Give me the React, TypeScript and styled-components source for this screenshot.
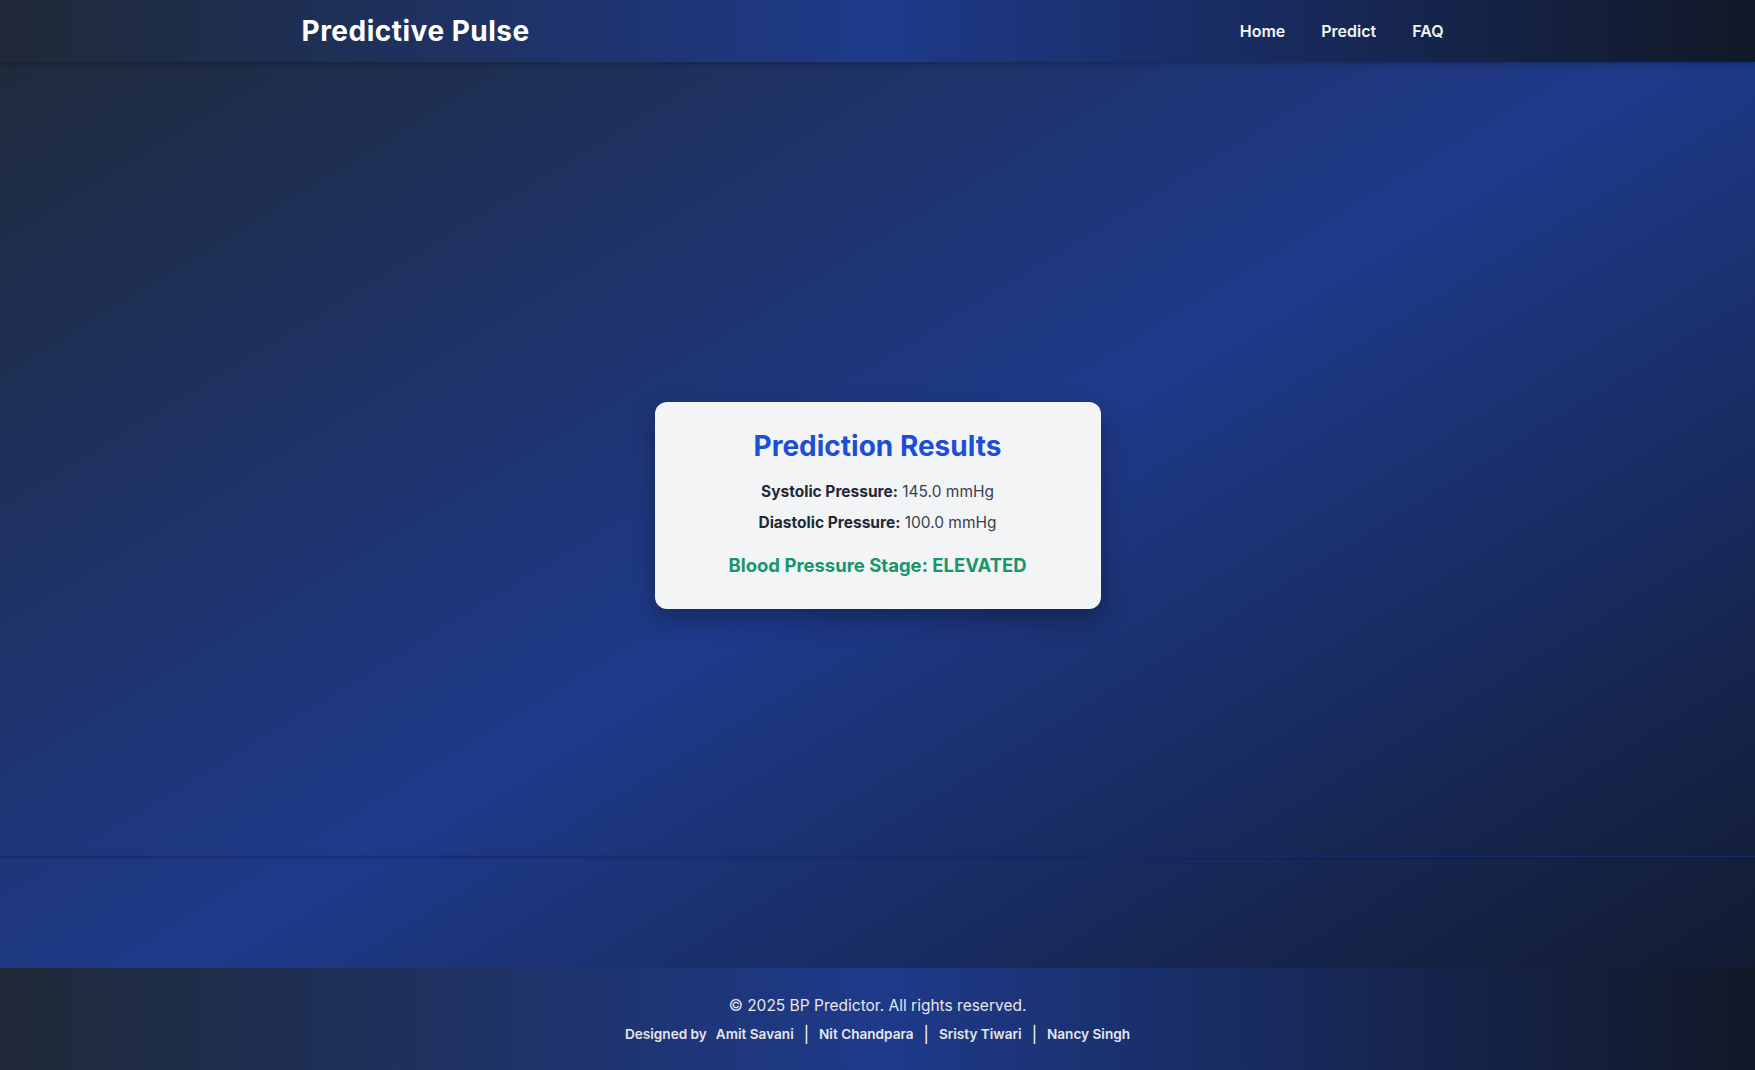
import React from "react";
import styled, { createGlobalStyle } from "styled-components";

const GlobalStyle = createGlobalStyle`
  html, body { margin: 0; padding: 0; }
  body {
    font-family: Inter, "Noto Sans", "Liberation Sans", sans-serif;
    -webkit-font-smoothing: antialiased;
  }
  * { box-sizing: border-box; }
`;

const Page = styled.div`
  min-height: 1070px;
  display: flex;
  flex-direction: column;
  background: linear-gradient(to bottom right, #1f2937, #1e3a8a, #111827);
`;

const Header = styled.header`
  height: 62px;
  background: linear-gradient(to right, #1f2937, #1e3a8a, #111827);
  box-shadow: 0 2px 6px rgba(0, 0, 0, 0.25);
  position: relative;
  z-index: 1;
`;

const HeaderInner = styled.div`
  max-width: 1152px;
  height: 100%;
  margin: 0 auto;
  display: flex;
  align-items: center;
  justify-content: space-between;
`;

const Logo = styled.div`
  color: #ffffff;
  font-size: 28px;
  font-weight: 700;
  letter-spacing: 0.5px;
`;

const Nav = styled.nav`
  display: flex;
  align-items: center;
  gap: 36px;
  padding-right: 10px;
`;

const NavLink = styled.a`
  color: #f3f4f6;
  font-size: 16px;
  font-weight: 600;
  text-decoration: none;
  cursor: pointer;
`;

const Main = styled.main`
  flex: 1;
  display: flex;
  flex-direction: column;
`;

const Content = styled.section`
  flex: 1;
  display: flex;
  align-items: center;
  justify-content: center;
  padding-top: 92px;
`;

const Divider = styled.div`
  height: 1px;
  background: #172a6b;
  box-shadow: 0 1px 3px rgba(10, 20, 60, 0.5);
`;

const Spacer = styled.div`
  height: 111px;
`;

const Card = styled.div`
  width: 446px;
  background: #f3f4f6;
  border-radius: 12px;
  padding: 26px 24px 31px;
  text-align: center;
  box-shadow: 0 10px 25px rgba(0, 0, 0, 0.3);
`;

const Title = styled.h2`
  margin: 0 0 16px;
  font-size: 28px;
  line-height: 36px;
  font-weight: 700;
  color: #1d4ed8;
`;

const Row = styled.p`
  margin: 0 0 7px;
  font-size: 15.5px;
  line-height: 24px;
  color: #374151;
`;

const Label = styled.strong`
  color: #1f2937;
  font-weight: 700;
`;

const Stage = styled.p`
  margin: 17px 0 0;
  font-size: 18.5px;
  line-height: 26px;
  font-weight: 700;
  color: #16966a;
`;

const Footer = styled.footer`
  height: 102px;
  background: linear-gradient(to right, #1f2937, #1e3a8a, #111827);
  display: flex;
  flex-direction: column;
  align-items: center;
  justify-content: center;
  gap: 7px;
`;

const Copyright = styled.div`
  color: #e5e7eb;
  font-size: 15.5px;
  line-height: 22px;
`;

const Credits = styled.div`
  display: flex;
  align-items: center;
  color: #e5e7eb;
  font-size: 13.6px;
  line-height: 20px;
  font-weight: 600;
`;

const DesignedBy = styled.span`
  margin-right: 9px;
`;

const Sep = styled.span`
  color: #ffffff;
  font-weight: 400;
  font-size: 16px;
  margin: 0 10px;
`;

const authors = ["Amit Savani", "Nit Chandpara", "Sristy Tiwari", "Nancy Singh"];

export default function App() {
  return (
    <>
      <GlobalStyle />
      <Page>
        <Header>
          <HeaderInner>
            <Logo>Predictive Pulse</Logo>
            <Nav>
              <NavLink>Home</NavLink>
              <NavLink>Predict</NavLink>
              <NavLink>FAQ</NavLink>
            </Nav>
          </HeaderInner>
        </Header>
        <Main>
          <Content>
            <Card>
              <Title>Prediction Results</Title>
              <Row>
                <Label>Systolic Pressure:</Label> 145.0 mmHg
              </Row>
              <Row>
                <Label>Diastolic Pressure:</Label> 100.0 mmHg
              </Row>
              <Stage>Blood Pressure Stage: ELEVATED</Stage>
            </Card>
          </Content>
          <Divider />
          <Spacer />
        </Main>
        <Footer>
          <Copyright>© 2025 BP Predictor. All rights reserved.</Copyright>
          <Credits>
            <DesignedBy>Designed by</DesignedBy>
            {authors.map((a, i) => (
              <React.Fragment key={a}>
                {i > 0 && <Sep>|</Sep>}
                <span>{a}</span>
              </React.Fragment>
            ))}
          </Credits>
        </Footer>
      </Page>
    </>
  );
}
